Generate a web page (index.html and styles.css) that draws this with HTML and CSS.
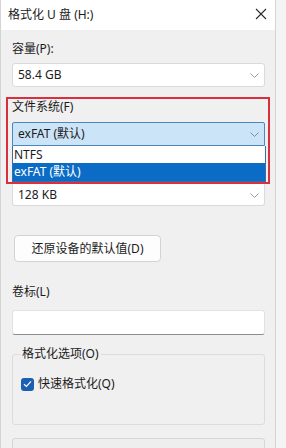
FILE: index.html
```html
<!DOCTYPE html>
<html lang="zh-CN">

<head>
    <meta charset="UTF-8">
    <meta name="viewport" content="width=device-width, initial-scale=1.0">
    <title>格式化 U 盘 (H:)</title>
    <link rel="stylesheet" href="styles.css">
</head>

<body>
    <div class="window">
        <div class="titlebar">
            <span class="title">格式化 U 盘 (H:)</span>
            <svg class="close" width="12" height="12" viewBox="0 0 12 12">
                <path d="M1 1 L11 11 M11 1 L1 11" stroke="#2b2b2b" stroke-width="1.1" fill="none" />
            </svg>
        </div>

        <div class="content">
            <div class="label">容量(P):</div>
            <div class="combo">
                <span>58.4 GB</span>
                <svg class="chevron" width="9" height="5" viewBox="0 0 9 5">
                    <path d="M0.5 0.5 L4.5 4.5 L8.5 0.5" stroke="#9a9a9a" fill="none" />
                </svg>
            </div>

            <div class="highlight">
                <div class="label">文件系统(F)</div>
                <div class="combo combo-open">
                    <span>exFAT (默认)</span>
                    <svg class="chevron" width="9" height="5" viewBox="0 0 9 5">
                        <path d="M0.5 0.5 L4.5 4.5 L8.5 0.5" stroke="#7a8ea2" fill="none" />
                    </svg>
                </div>
                <div class="dropdown">
                    <div class="option">NTFS</div>
                    <div class="option selected">exFAT (默认)</div>
                </div>
            </div>

            <div class="combo combo-cut">
                <span>128 KB</span>
                <svg class="chevron" width="9" height="5" viewBox="0 0 9 5">
                    <path d="M0.5 0.5 L4.5 4.5 L8.5 0.5" stroke="#9a9a9a" fill="none" />
                </svg>
            </div>

            <button class="btn">还原设备的默认值(D)</button>

            <div class="label label-vol">卷标(L)</div>
            <div class="textbox"></div>

            <fieldset class="group">
                <legend>格式化选项(O)</legend>
                <label class="check">
                    <span class="box">
                        <svg width="9" height="8" viewBox="0 0 9 8">
                            <path d="M1 4.2 L3.4 6.4 L8 1.4" stroke="#fff" stroke-width="1.2" fill="none" />
                        </svg>
                    </span>
                    快速格式化(Q)
                </label>
            </fieldset>

            <div class="bottom-box"></div>
        </div>
    </div>
</body>

</html>
```

FILE: styles.css
```css
body {
    margin: 0;
    background: #f4f4f4;
    font-family: "Noto Sans", "Noto Sans CJK SC", sans-serif;
    font-size: 12px;
    line-height: 16px;
    color: #1b1b1b;
}

.window {
    width: 276px;
    height: 448px;
    overflow: hidden;
    background: #f0f0f0;
    border-left: 1px solid #d4d4d4;
    border-right: 1px solid #d4d4d4;
    box-sizing: border-box;
}

.titlebar {
    height: 30px;
    background: #fff;
    display: flex;
    align-items: center;
    justify-content: space-between;
    padding: 0 8px 0 7px;
}

.close {
    margin-top: -2px;
}

.content {
    padding: 11px 10px 0 11px;
}

.label {
    height: 16px;
}

.combo {
    height: 24px;
    margin-top: 6px;
    background: #fff;
    border: 1px solid #dadada;
    border-radius: 3px;
    box-sizing: border-box;
    display: flex;
    align-items: center;
    justify-content: space-between;
    padding: 0 5px 0 5px;
}

.chevron {
    margin-top: 1px;
}

.highlight {
    margin: 10px -5px 0 -6px;
    border: 2px solid #d8303f;
    padding: 0 3px 0 4px;
}

.combo-open {
    margin-top: 7px;
    background: #cce4f7;
    border-color: #4d87bd;
    border-radius: 2px 2px 0 0;
}

.dropdown {
    border: 1px solid #3a6ea5;
    border-top: none;
    background: #fff;
    margin-right: -1px;
}

.option {
    height: 17px;
    line-height: 17px;
    padding-left: 1px;
}

.option.selected {
    height: 18px;
    background: #0a6cc6;
    color: #fff;
}

.combo-cut {
    margin-top: 0;
    height: 22px;
    border-top: none;
    border-radius: 0 0 3px 3px;
}

.btn {
    display: block;
    width: 147px;
    height: 27px;
    margin: 29px 0 0 2px;
    background: #fdfdfd;
    border: 1px solid #d3d3d3;
    border-radius: 4px;
    font: inherit;
    color: inherit;
    padding: 0;
}

.label-vol {
    margin-top: 22px;
}

.textbox {
    height: 25px;
    margin-top: 10px;
    background: #fff;
    border: 1px solid #e2e2e2;
    border-bottom: 1px solid #8d8d8d;
    border-radius: 3px;
    box-sizing: border-box;
}

.group {
    margin: 11px 0 0 0;
    padding: 6px 8px 0 8px;
    height: 79px;
    box-sizing: border-box;
    border: 1px solid #dcdcdc;
    border-radius: 3px;
}

.group legend {
    padding: 0 2px;
    margin-left: -1px;
}

.check {
    display: flex;
    align-items: center;
    gap: 4px;
    margin-top: 8px;
}

.box {
    width: 13px;
    height: 13px;
    border-radius: 3px;
    background: #1b5fb3;
    display: flex;
    align-items: center;
    justify-content: center;
}

.bottom-box {
    height: 30px;
    margin-top: 13px;
    border: 1px solid #d6d6d6;
    border-radius: 3px;
    background: #eeeeee;
}
```
